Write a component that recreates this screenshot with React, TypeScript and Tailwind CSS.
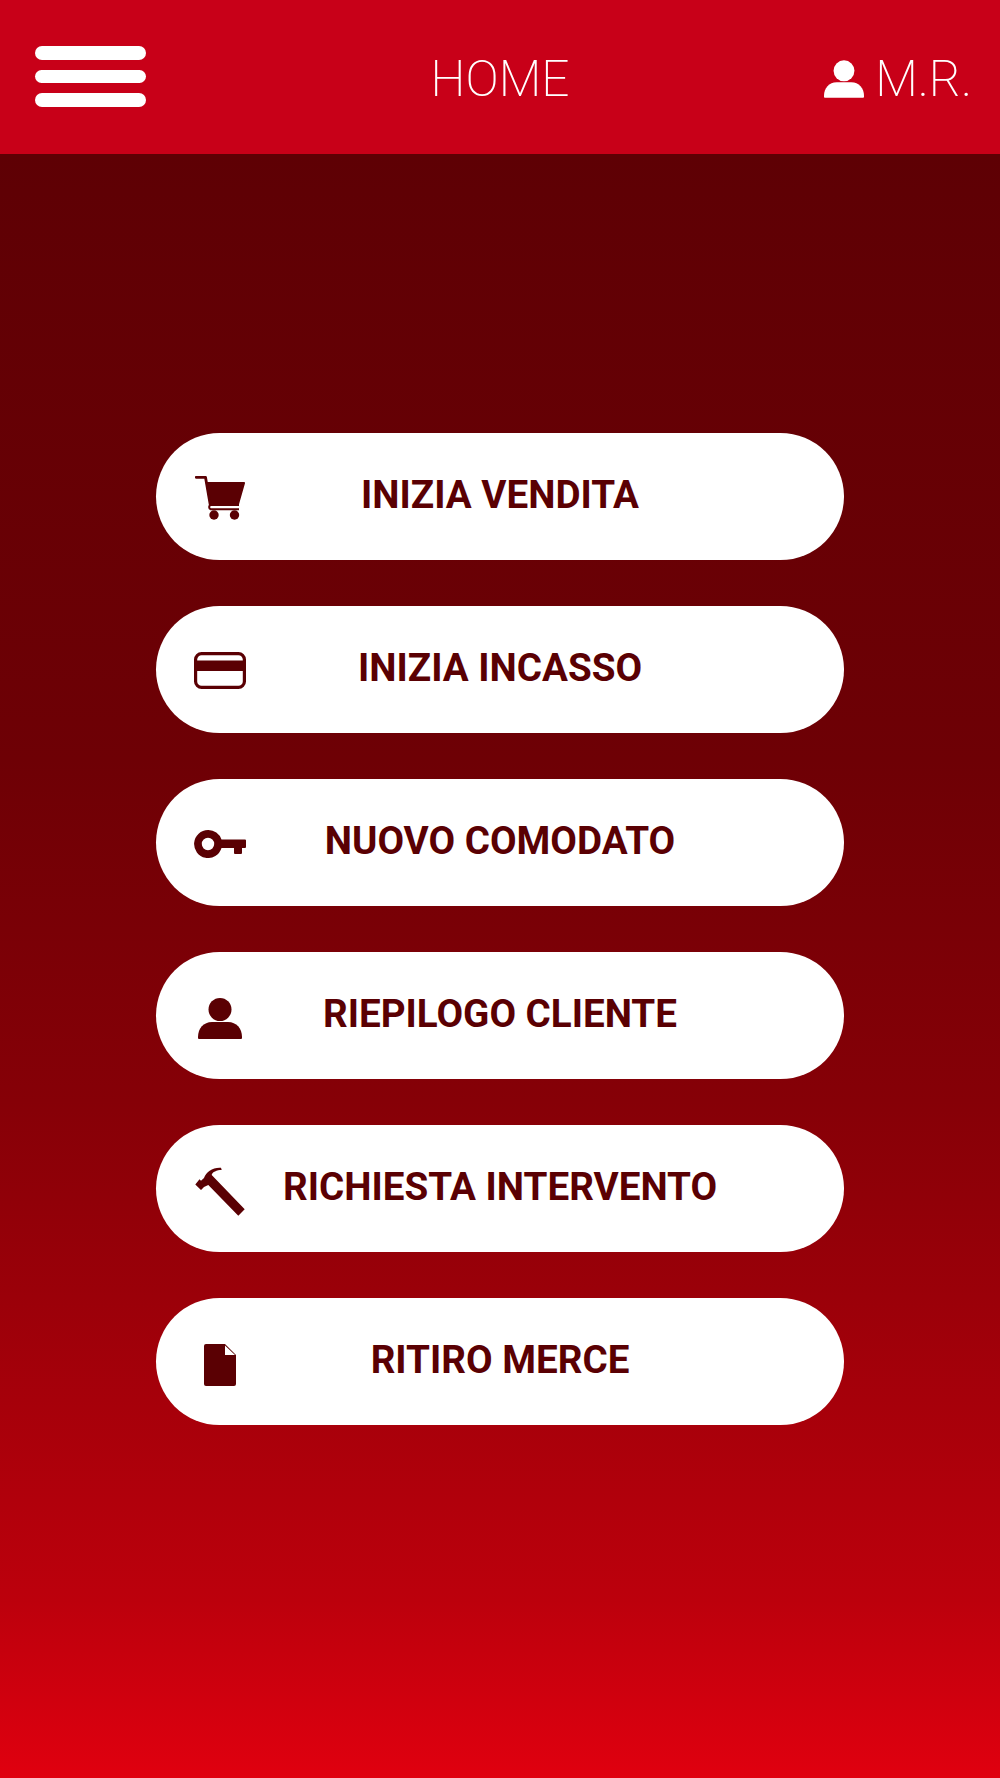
const dark = "#5a0003";

const Person = ({ className, fill }: { className: string; fill: string }) => (
  <svg viewBox="0 0 44 41" className={className} fill={fill}>
    <circle cx="22" cy="11.500" r="11.500" />
    <path d="M0 39C0 30.500 5.500 24 14 24H30C38.500 24 44 30.500 44 39V40a1 1 0 0 1-1 1H1a1 1 0 0 1-1-1Z" />
  </svg>
);

const Cart = () => (
  <svg viewBox="0 0 50 44" className="w-[50px] h-[44px]" fill={dark}>
    <path d="M10.500 6H49a1 1 0 0 1 1 1.200L44 28.300H14.500Z" />
    <path d="M1.300 1.300H10.500L15.200 28.500" stroke={dark} strokeWidth="2.800" fill="none" strokeLinecap="round" strokeLinejoin="round" />
    <path d="M44 29H15.500a2.300 2.300 0 0 0 0 4.200H44" stroke={dark} strokeWidth="2" fill="none" />
    <circle cx="19" cy="39" r="4.700" />
    <circle cx="39.500" cy="39" r="4.700" />
  </svg>
);

const Card = () => (
  <svg viewBox="0 0 52 37" className="w-[52px] h-[37px]" fill="none">
    <rect x="1.600" y="1.600" width="48.800" height="33.800" rx="6" stroke={dark} strokeWidth="3.200" />
    <rect x="2" y="8.500" width="48" height="10.500" fill={dark} />
  </svg>
);

const Key = () => (
  <svg viewBox="0 0 52 28" className="w-[52px] h-[28px]" fill={dark}>
    <path fillRule="evenodd" d="M14 0a14 14 0 0 1 13.500 9.500H51a1 1 0 0 1 1 1V17a1 1 0 0 1-1 1H48V23a1 1 0 0 1-1 1H41a1 1 0 0 1-1-1V18H27.500A14 14 0 1 1 14 0ZM14 7.800a6.200 6.200 0 1 0 0 12.400 6.200 6.200 0 0 0 0-12.400Z" />
  </svg>
);

const Hammer = () => (
  <svg viewBox="0 0 50 49" className="w-[50px] h-[49px]" fill={dark}>
    <path d="M0.300 17.500 4.500 12.300 6 13.800 9 11C11 5 18 0 26 0.700L26.700 3C22 3 17 5 16.700 8L49.700 42.300 43.300 48.700 13.300 18 9 20 6 23Z" />
  </svg>
);

const FileIcon = () => (
  <svg viewBox="0 0 32 42" className="w-[32px] h-[42px]">
    <path d="M2 0H21L32 11V40a2 2 0 0 1-2 2H2a2 2 0 0 1-2-2V2a2 2 0 0 1 2-2Z" fill={dark} />
    <path d="M21 1.500 31 11H21Z" fill="#ffffff" />
  </svg>
);

const items = [
  { label: "INIZIA VENDITA", icon: <Cart />, iconClass: "mt-[2px]" },
  { label: "INIZIA INCASSO", icon: <Card />, iconClass: "mt-[2px]" },
  { label: "NUOVO COMODATO", icon: <Key />, iconClass: "mt-[2px]" },
  { label: "RIEPILOGO CLIENTE", icon: <Person className="w-[44px] h-[41px]" fill={dark} />, iconClass: "mt-[6px]" },
  { label: "RICHIESTA INTERVENTO", icon: <Hammer />, iconClass: "mt-[5px]" },
  { label: "RITIRO MERCE", icon: <FileIcon />, iconClass: "mt-[7px]" },
];

export default function App() {
  return (
    <div
      className="w-[1000px] h-[1778px] flex flex-col bg-[linear-gradient(180deg,#5e0004_8.7%,#6e0005_42.7%,#860007_61.9%,#a6000a_78.7%,#bc000c_90%,#d0000e_95.6%,#e0000f_100%)]"
      style={{ fontFamily: "Roboto, sans-serif" }}
    >
      <header className="h-[154px] bg-[#c80018] grid grid-cols-[1fr_auto_1fr] items-center pl-[35px] pr-[28px] text-white">
        <div className="flex flex-col gap-[10px] w-[111px] -mt-[1px]">
          <span className="h-[14px] rounded-[7px] bg-white" />
          <span className="h-[13px] rounded-[7px] bg-white" />
          <span className="h-[14px] rounded-[7px] bg-white" />
        </div>
        <div className="text-[49.500px] leading-none font-extralight mt-[5px] -ml-[7px]">HOME</div>
        <div className="flex items-center justify-end gap-[11px] mt-[5px]">
          <Person className="w-[40px] h-[38px] -mt-[2px]" fill="#ffffff" />
          <span className="text-[49.500px] leading-none font-extralight">M.R.</span>
        </div>
      </header>
      <main className="flex flex-col gap-[46px] mt-[278px] mx-[156px] pt-[1px]">
        {items.map((item) => (
          <button
            key={item.label}
            className="h-[127px] rounded-full bg-white grid grid-cols-[1fr_auto_1fr] items-center pl-[38px] pr-[38px]"
          >
            <span className={`flex justify-center w-[52px] ${item.iconClass}`}>{item.icon}</span>
            <span className="text-[38.600px] leading-none font-bold text-[#5a0003] -mt-[3px]">{item.label}</span>
            <span />
          </button>
        ))}
      </main>
    </div>
  );
}
